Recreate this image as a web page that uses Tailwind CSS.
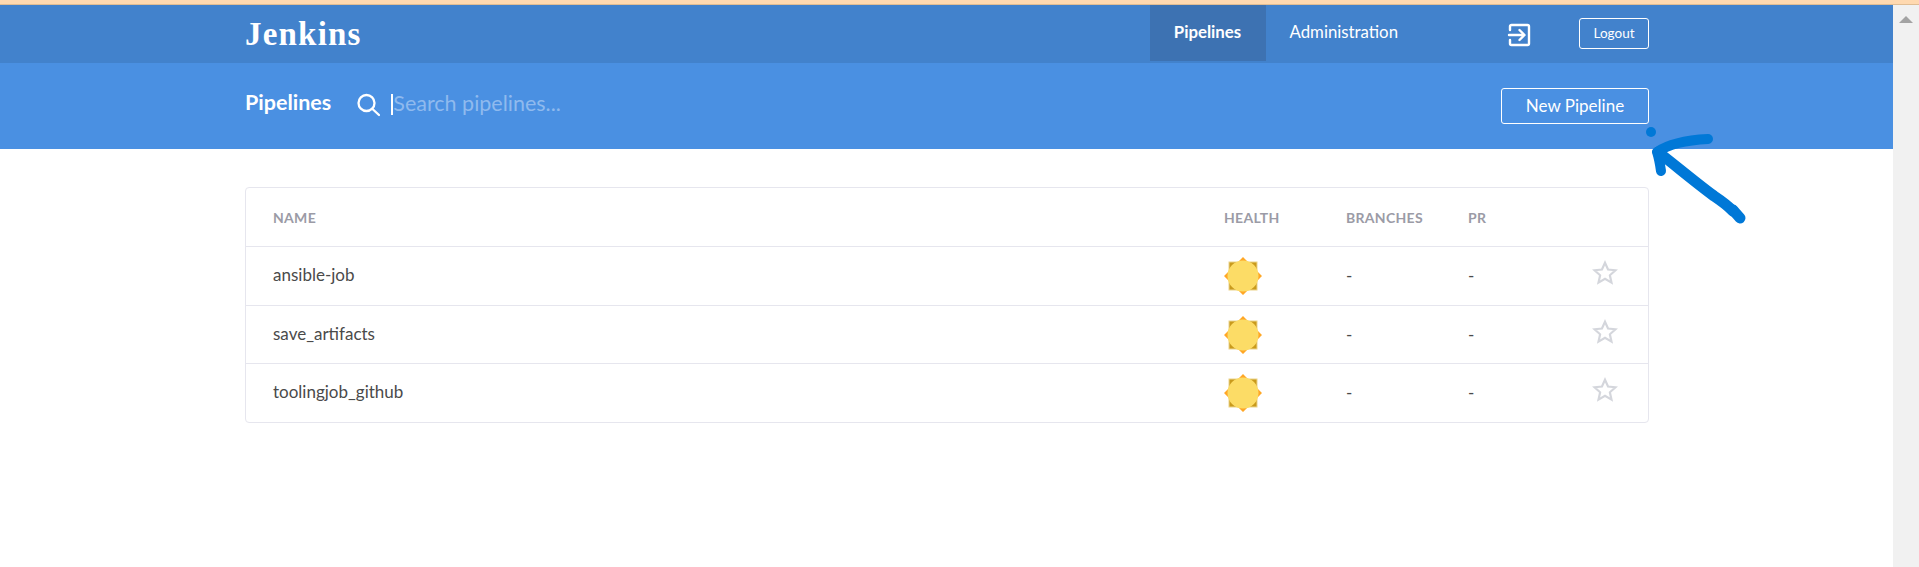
<!DOCTYPE html>
<html>

<head>
    <meta charset='UTF-8'>
    <title>Jenkins</title>
    <script src="https://cdn.jsdelivr.net/npm/@tailwindcss/browser@4"></script>
</head>

<body class="h-[567px] overflow-hidden bg-white font-['Lato',sans-serif] relative">

    <div class="h-[4px] bg-[#ffd9b0] border-b border-[#e0bd94] box-content"></div>

    <div class="flex h-[562px]">
        <main class="flex-1 min-w-0">
            <!-- top nav -->
            <header class="h-[58px] bg-[#4282cc] pl-[245px] pr-[244px] flex items-stretch text-white">
                <div class="font-['Liberation_Serif',serif] font-bold text-[33px] leading-none pt-[13px] tracking-[1.2px]">Jenkins</div>
                <nav class="ml-auto flex text-[16.800px]">
                    <a class="w-[116px] h-[56px] bg-[#3d72b2] font-bold flex items-center justify-center pb-[3px]">Pipelines</a>
                    <a class="ml-[24px] h-[56px] flex items-center pb-[3px]">Administration</a>
                </nav>
                <svg class="ml-[109px] mt-[18px]" width="24" height="24" viewBox="0 0 24 24" fill="none" stroke="white" stroke-width="2.4" stroke-linecap="round" stroke-linejoin="round">
                    <path d="M3 7V3.500A1.500 1.500 0 0 1 4.500 2h16A1.500 1.500 0 0 1 22 3.500v17a1.500 1.500 0 0 1-1.500 1.500h-16A1.500 1.500 0 0 1 3 20.500V17" />
                    <path d="M2 12h15M12.500 7l5 5-5 5" />
                </svg>
                <button class="ml-[48px] mt-[13px] w-[70px] h-[31px] border border-white rounded-[3px] text-[13.500px] leading-none">Logout</button>
            </header>

            <!-- sub header -->
            <section class="h-[86px] bg-[#4a90e2] pl-[245px] pr-[244px] flex items-center text-white">
                <h1 class="font-bold text-[21.500px] -mt-[7px]">Pipelines</h1>
                <svg class="ml-[25px] -mt-[3px]" width="24" height="24" viewBox="0 0 24 24" fill="none" stroke="white" stroke-width="2.300" stroke-linecap="round">
                    <circle cx="10.500" cy="10" r="8" />
                    <path d="M16.500 16l6.500 6" />
                </svg>
                <div class="ml-[11px] w-[2px] h-[21px] bg-white -mt-[3px]"></div>
                <span class="text-[21.500px] text-[#8fbaee] -mt-[5px]">Search pipelines...</span>
                <button class="ml-auto w-[148px] h-[36px] border border-white rounded-[3px] text-[17px] leading-none pb-[2px]">New Pipeline</button>
            </section>

            <!-- table -->
            <div class="mx-[245px] w-[1404px] mt-[38px] border border-[#e6e6ee] rounded-[4px] text-[17px] text-[#4a4a4a]">
                <div class="h-[59px] flex items-center pl-[27px] text-[14px] font-bold text-[#9b9ba6] tracking-[0.3px] border-b border-[#e6e6ee]">
                    <span class="w-[951px]">NAME</span>
                    <span class="w-[122px]">HEALTH</span>
                    <span class="w-[122px]">BRANCHES</span>
                    <span>PR</span>
                </div>

                <div class="h-[59px] flex items-center pl-[27px] border-b border-[#e6e6ee]">
                    <span class="w-[951px] -mt-[2px]">ansible-job</span>
                    <span class="w-[122px]">
                        <svg class="block" width="38" height="38" viewBox="0 0 38 38">
                            <path fill="#ffa726" d="M19 0l5 5h-10zM19 38l5-5h-10zM0 19l5-5v10zM38 19l-5-5v10z" />
                            <rect x="5" y="5" width="28" height="28" fill="#c99a1c" stroke="#ecd48a" />
                            <circle cx="19" cy="19" r="15.500" fill="#fcdc66" />
                        </svg>
                    </span>
                    <span class="w-[122px]">-</span>
                    <span class="w-[124px]">-</span>
                    <svg width="26" height="26" viewBox="0 0 24 24" fill="none" stroke="#d4d6dc" stroke-width="2" class="-mt-[6px]">
                        <path d="M12 2.500l2.800 6.300 6.900.7-5.200 4.600 1.500 6.800-6-3.500-6 3.500 1.500-6.800-5.200-4.600 6.900-.7z" />
                    </svg>
                </div>

                <div class="h-[58px] flex items-center pl-[27px] border-b border-[#e6e6ee]">
                    <span class="w-[951px] -mt-[2px]">save_artifacts</span>
                    <span class="w-[122px]">
                        <svg class="block" width="38" height="38" viewBox="0 0 38 38">
                            <path fill="#ffa726" d="M19 0l5 5h-10zM19 38l5-5h-10zM0 19l5-5v10zM38 19l-5-5v10z" />
                            <rect x="5" y="5" width="28" height="28" fill="#c99a1c" stroke="#ecd48a" />
                            <circle cx="19" cy="19" r="15.500" fill="#fcdc66" />
                        </svg>
                    </span>
                    <span class="w-[122px]">-</span>
                    <span class="w-[124px]">-</span>
                    <svg width="26" height="26" viewBox="0 0 24 24" fill="none" stroke="#d4d6dc" stroke-width="2" class="-mt-[6px]">
                        <path d="M12 2.500l2.800 6.300 6.900.7-5.200 4.600 1.500 6.800-6-3.500-6 3.500 1.500-6.800-5.200-4.600 6.900-.7z" />
                    </svg>
                </div>

                <div class="h-[58px] flex items-center pl-[27px]">
                    <span class="w-[951px] -mt-[2px]">toolingjob_github</span>
                    <span class="w-[122px]">
                        <svg class="block" width="38" height="38" viewBox="0 0 38 38">
                            <path fill="#ffa726" d="M19 0l5 5h-10zM19 38l5-5h-10zM0 19l5-5v10zM38 19l-5-5v10z" />
                            <rect x="5" y="5" width="28" height="28" fill="#c99a1c" stroke="#ecd48a" />
                            <circle cx="19" cy="19" r="15.500" fill="#fcdc66" />
                        </svg>
                    </span>
                    <span class="w-[122px]">-</span>
                    <span class="w-[124px]">-</span>
                    <svg width="26" height="26" viewBox="0 0 24 24" fill="none" stroke="#d4d6dc" stroke-width="2" class="-mt-[6px]">
                        <path d="M12 2.500l2.800 6.300 6.900.7-5.200 4.600 1.500 6.800-6-3.500-6 3.500 1.500-6.800-5.200-4.600 6.900-.7z" />
                    </svg>
                </div>
            </div>
        </main>

        <!-- browser scrollbar -->
        <aside class="w-[26px] shrink-0 bg-[#f1f1f1] flex justify-center pt-[11px]">
            <div class="w-0 h-0 border-x-[7px] border-x-transparent border-b-[7px] border-b-[#a3a3a3]"></div>
        </aside>
    </div>

    <!-- hand-drawn annotation arrow -->
    <svg class="absolute left-[1640px] top-[120px]" width="130" height="110" viewBox="0 0 130 110" fill="none" stroke="#0078d7" stroke-linecap="round" stroke-linejoin="round">
        <circle cx="11" cy="12" r="5" fill="#0078d7" stroke="none" />
        <path stroke-width="10" d="M68 19C48 20 30 23 17 32C19 38 20 44 21 51" />
        <path stroke-width="11" d="M18 32C35 45 55 62 74 76C83 82 90 88 93 91" />
        <path stroke-width="11" d="M93 90L100 98" />
    </svg>

</body>

</html>
